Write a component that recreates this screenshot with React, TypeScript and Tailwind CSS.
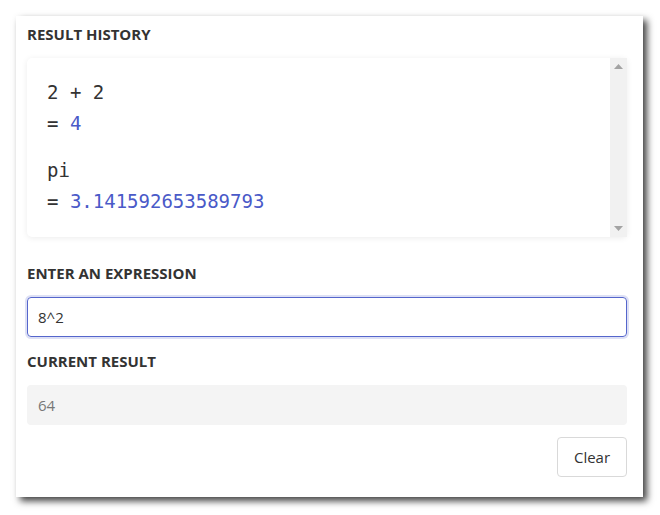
import { useState } from 'react'

const history = [
  { expr: '2 + 2', result: '4' },
  { expr: 'pi', result: '3.141592653589793' },
]

const sans = { fontFamily: '"Open Sans", "Noto Sans", sans-serif' }
const mono = { fontFamily: '"DejaVu Sans Mono", "Liberation Mono", monospace' }

export default function App() {
  const [expr, setExpr] = useState('8^2')

  return (
    <div className="min-h-[515px] w-[660px] bg-white pl-4 pt-4" style={sans}>
      <div className="h-[481px] w-[627px] bg-white pl-[11px] pr-[16px] pt-[8px] shadow-[4px_4px_7px_rgba(0,0,0,0.75)]">
        <h2 className="text-[15px] font-bold leading-[20px] text-[#333]">RESULT HISTORY</h2>

        <div className="mt-[14px] flex h-[179px] rounded-[5px] bg-white shadow-[0_1px_6px_rgba(0,0,0,0.08)]">
          <div className="flex-1 pl-[20px] pt-[19px] text-[19px] text-[#333]" style={mono}>
            {history.map((h, i) => (
              <div key={i} className="mb-[16px]">
                <div className="leading-[31px]">{h.expr}</div>
                <div className="leading-[31px]">
                  = <span className="text-[#4a5ac8]">{h.result}</span>
                </div>
              </div>
            ))}
          </div>
          <div className="flex w-[17px] flex-col items-center justify-between bg-[#f1f1f1] py-[6px]">
            <svg width="9" height="5" viewBox="0 0 9 5"><path d="M4.5 0L9 5H0z" fill="#a3a3a3" /></svg>
            <svg width="9" height="5" viewBox="0 0 9 5"><path d="M0 0h9L4.5 5z" fill="#a3a3a3" /></svg>
          </div>
        </div>

        <h2 className="mt-[26px] text-[15px] font-bold leading-[20px] text-[#333]">ENTER AN EXPRESSION</h2>
        <input
          value={expr}
          onChange={e => setExpr(e.target.value)}
          className="mt-[14px] block h-[40px] w-full rounded-[4px] border border-[#5566cc] px-[10px] text-[15px] text-[#333] shadow-[0_0_0_2px_rgba(85,102,204,0.2)] outline-none"
          style={sans}
        />

        <h2 className="mt-[14px] text-[15px] font-bold leading-[20px] text-[#333]">CURRENT RESULT</h2>
        <div className="mt-[14px] flex h-[40px] items-center rounded-[4px] bg-[#f4f4f4] px-[11px] text-[15px] text-[#777]">
          64
        </div>

        <div className="mt-[12px] flex justify-end">
          <button className="h-[40px] w-[70px] rounded-[4px] border border-[#d9d9d9] bg-white text-[15px] text-[#333]">
            Clear
          </button>
        </div>
      </div>
    </div>
  )
}
